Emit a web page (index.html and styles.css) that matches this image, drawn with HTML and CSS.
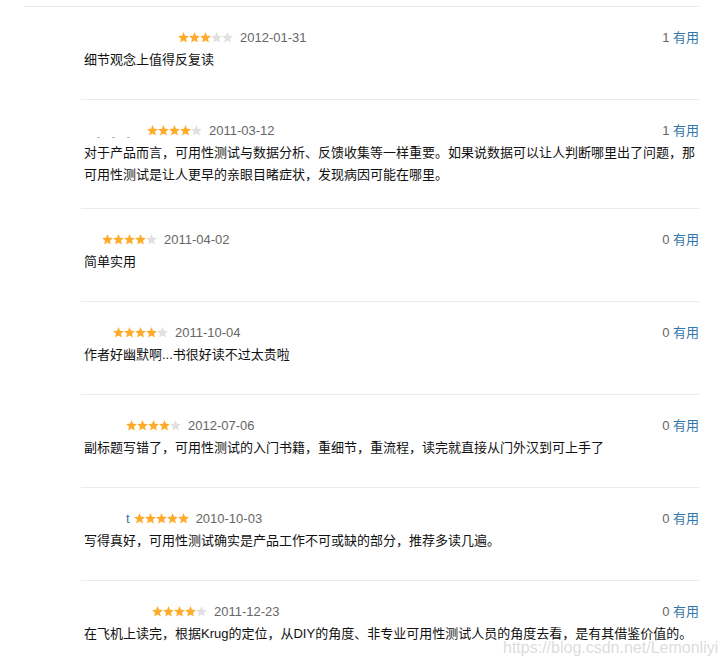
FILE: index.html
```html
<!DOCTYPE html>
<html lang="zh-CN">
<head>
<meta charset="utf-8">
<title>短评</title>
<link rel="stylesheet" href="styles.css">
</head>
<body>
<svg class="defs" width="0" height="0" aria-hidden="true">
  <symbol id="star" viewBox="0 0 11 11">
    <path d="M5.5 0.1 L7.03 3.8 L10.95 4.11 L7.97 6.7 L8.91 10.59 L5.5 8.5 L2.09 10.59 L3.03 6.7 L0.05 4.11 L3.97 3.8Z"/>
  </symbol>
</svg>
<div class="page">
  <div class="top-rule"></div>
  <ul class="comments">
    <li class="item">
      <div class="head">
        <div class="info">
          <span class="user w94"></span>
          <svg class="stars" width="55" height="11" viewBox="0 0 55 11"><use href="#star" x="0" width="11" height="11" class="on"/><use href="#star" x="11" width="11" height="11" class="on"/><use href="#star" x="22" width="11" height="11" class="on"/><use href="#star" x="33" width="11" height="11" class="off"/><use href="#star" x="44" width="11" height="11" class="off"/></svg>
          <span class="date">2012-01-31</span>
        </div>
        <div class="vote"><span class="count">1</span> <a class="useful">有用</a></div>
      </div>
      <p class="text">细节观念上值得反复读</p>
    </li>
    <li class="item">
      <div class="head">
        <div class="info">
          <span class="user w63"><span class="ghost"></span></span>
          <svg class="stars" width="55" height="11" viewBox="0 0 55 11"><use href="#star" x="0" width="11" height="11" class="on"/><use href="#star" x="11" width="11" height="11" class="on"/><use href="#star" x="22" width="11" height="11" class="on"/><use href="#star" x="33" width="11" height="11" class="on"/><use href="#star" x="44" width="11" height="11" class="off"/></svg>
          <span class="date">2011-03-12</span>
        </div>
        <div class="vote"><span class="count">1</span> <a class="useful">有用</a></div>
      </div>
      <p class="text">对于产品而言，可用性测试与数据分析、反馈收集等一样重要。如果说数据可以让人判断哪里出了问题，那可用性测试是让人更早的亲眼目睹症状，发现病因可能在哪里。</p>
    </li>
    <li class="item">
      <div class="head">
        <div class="info">
          <span class="user w18"></span>
          <svg class="stars" width="55" height="11" viewBox="0 0 55 11"><use href="#star" x="0" width="11" height="11" class="on"/><use href="#star" x="11" width="11" height="11" class="on"/><use href="#star" x="22" width="11" height="11" class="on"/><use href="#star" x="33" width="11" height="11" class="on"/><use href="#star" x="44" width="11" height="11" class="off"/></svg>
          <span class="date">2011-04-02</span>
        </div>
        <div class="vote"><span class="count">0</span> <a class="useful">有用</a></div>
      </div>
      <p class="text">简单实用</p>
    </li>
    <li class="item">
      <div class="head">
        <div class="info">
          <span class="user w29"></span>
          <svg class="stars" width="55" height="11" viewBox="0 0 55 11"><use href="#star" x="0" width="11" height="11" class="on"/><use href="#star" x="11" width="11" height="11" class="on"/><use href="#star" x="22" width="11" height="11" class="on"/><use href="#star" x="33" width="11" height="11" class="on"/><use href="#star" x="44" width="11" height="11" class="off"/></svg>
          <span class="date">2011-10-04</span>
        </div>
        <div class="vote"><span class="count">0</span> <a class="useful">有用</a></div>
      </div>
      <p class="text">作者好幽默啊...书很好读不过太贵啦</p>
    </li>
    <li class="item">
      <div class="head">
        <div class="info">
          <span class="user w42"></span>
          <svg class="stars" width="55" height="11" viewBox="0 0 55 11"><use href="#star" x="0" width="11" height="11" class="on"/><use href="#star" x="11" width="11" height="11" class="on"/><use href="#star" x="22" width="11" height="11" class="on"/><use href="#star" x="33" width="11" height="11" class="on"/><use href="#star" x="44" width="11" height="11" class="off"/></svg>
          <span class="date">2012-07-06</span>
        </div>
        <div class="vote"><span class="count">0</span> <a class="useful">有用</a></div>
      </div>
      <p class="text">副标题写错了，可用性测试的入门书籍，重细节，重流程，读完就直接从门外汉到可上手了</p>
    </li>
    <li class="item">
      <div class="head">
        <div class="info">
          <span class="user w42"></span><a class="name">t</a>
          <svg class="stars" width="55" height="11" viewBox="0 0 55 11"><use href="#star" x="0" width="11" height="11" class="on"/><use href="#star" x="11" width="11" height="11" class="on"/><use href="#star" x="22" width="11" height="11" class="on"/><use href="#star" x="33" width="11" height="11" class="on"/><use href="#star" x="44" width="11" height="11" class="on"/></svg>
          <span class="date">2010-10-03</span>
        </div>
        <div class="vote"><span class="count">0</span> <a class="useful">有用</a></div>
      </div>
      <p class="text">写得真好，可用性测试确实是产品工作不可或缺的部分，推荐多读几遍。</p>
    </li>
    <li class="item">
      <div class="head">
        <div class="info">
          <span class="user w68"></span>
          <svg class="stars" width="55" height="11" viewBox="0 0 55 11"><use href="#star" x="0" width="11" height="11" class="on"/><use href="#star" x="11" width="11" height="11" class="on"/><use href="#star" x="22" width="11" height="11" class="on"/><use href="#star" x="33" width="11" height="11" class="on"/><use href="#star" x="44" width="11" height="11" class="off"/></svg>
          <span class="date">2011-12-23</span>
        </div>
        <div class="vote"><span class="count">0</span> <a class="useful">有用</a></div>
      </div>
      <p class="text">在飞机上读完，根据Krug的定位，从DIY的角度、非专业可用性测试人员的角度去看，是有其借鉴价值的。</p>
    </li>
  </ul>
  <div class="watermark">https://blog.csdn.net/Lemonliyi</div>
</div>
</body>
</html>
```

FILE: styles.css
```css
html, body {
  margin: 0;
  padding: 0;
  background: #fff;
}
body {
  font-family: "Liberation Sans", "Noto Sans CJK SC", sans-serif;
  font-size: 13px;
  color: #111;
  overflow: hidden;
}
.defs {
  position: absolute;
  width: 0;
  height: 0;
}
.page {
  position: relative;
  height: 663px;
  overflow: hidden;
}
.top-rule {
  margin: 6px 0 0 24px;
  width: 675px;
  height: 1px;
  background: #ebebeb;
}
.comments {
  list-style: none;
  margin: 0 0 0 81px;
  padding: 0;
  width: 618px;
}
.item {
  padding: 21px 0 22px 3px;
  border-bottom: 1px solid #ebebeb;
}
.head {
  display: flex;
  justify-content: space-between;
  align-items: center;
  height: 20px;
  line-height: 20px;
}
.info {
  display: flex;
  align-items: center;
}
.user {
  display: inline-block;
  position: relative;
  height: 20px;
}
.w94 { width: 94px; }
.w63 { width: 63px; }
.w18 { width: 18px; }
.w29 { width: 29px; }
.w42 { width: 42px; }
.w68 { width: 68px; }
.ghost {
  position: absolute;
  left: 13px;
  top: 16px;
  width: 36px;
  height: 1px;
  background: repeating-linear-gradient(90deg, rgba(51, 119, 170, 0.45) 0 3px, transparent 3px 15px);
}
.name {
  color: #37a;
  margin-right: 4px;
}
.stars {
  display: block;
  margin-top: -1px;
}
.stars .on { fill: #ffac2d; }
.stars .off { fill: #e0e0e0; }
.date {
  margin-left: 7px;
  color: #666;
}
.vote {
  color: #666;
  white-space: nowrap;
}
.useful {
  color: #37a;
  text-decoration: none;
}
.text {
  margin: 1px 0 0 0;
  line-height: 22px;
  min-height: 28px;
  color: #111;
}
.watermark {
  position: absolute;
  left: 503px;
  top: 638px;
  font-family: "Liberation Sans", sans-serif;
  font-size: 16px;
  line-height: 20px;
  color: rgba(190, 190, 190, 0.55);
  text-shadow: 0 0 1px rgba(255, 255, 255, 0.9);
  white-space: nowrap;
}
```
